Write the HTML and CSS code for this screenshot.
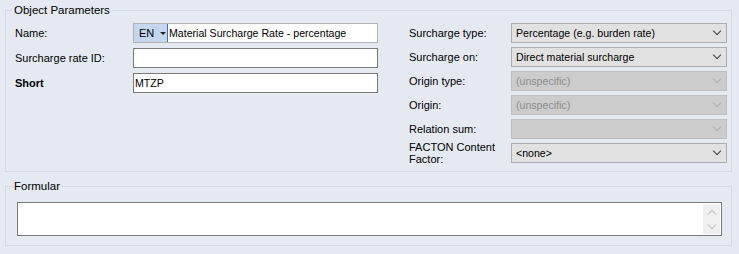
FILE: index.html
```html
<!DOCTYPE html>
<html lang="en">
<head>
    <meta charset="UTF-8">
    <title>Object Parameters</title>
    <link rel="stylesheet" href="styles.css">
</head>
<body>
    <fieldset class="group params">
        <legend>Object Parameters</legend>
        <div class="columns">
            <div class="form-grid left">
                <label>Name:</label>
                <div class="textbox name-box">
                    <span class="lang">EN <span class="caret"></span></span>
                    <span class="split"></span>
                    <span class="value">Material Surcharge Rate - percentage</span>
                </div>

                <label>Surcharge rate ID:</label>
                <div class="textbox"></div>

                <label class="bold">Short</label>
                <div class="textbox"><span class="value">MTZP</span></div>
            </div>

            <div class="form-grid right">
                <label>Surcharge type:</label>
                <div class="combo">Percentage (e.g. burden rate)<span class="chev"></span></div>

                <label>Surcharge on:</label>
                <div class="combo">Direct material surcharge<span class="chev"></span></div>

                <label>Origin type:</label>
                <div class="combo disabled">(unspecific)<span class="chev"></span></div>

                <label>Origin:</label>
                <div class="combo disabled">(unspecific)<span class="chev"></span></div>

                <label>Relation sum:</label>
                <div class="combo disabled"><span class="chev"></span></div>

                <label class="two-lines">FACTON Content Factor:</label>
                <div class="combo">&lt;none&gt;<span class="chev"></span></div>
            </div>
        </div>
    </fieldset>

    <fieldset class="group formular">
        <legend>Formular</legend>
        <div class="memo">
            <div class="scroll">
                <span class="arrow up"></span>
                <span class="arrow down"></span>
            </div>
        </div>
    </fieldset>
</body>
</html>
```

FILE: styles.css
```css
body {
    margin: 0;
    padding: 4px 0 0 0;
    background-color: #e5e9f2;
    font-family: "Liberation Sans", Arial, sans-serif;
    font-size: 11px;
    color: #000;
    width: 739px;
    height: 250px;
    overflow: hidden;
}
.group {
    margin: 0 0 0 5px;
    width: 727px;
    padding: 0;
    border: 1px solid #d6d9df;
    box-sizing: border-box;
}
.group legend {
    margin-left: 6px;
    padding: 0 2px;
    font-size: 11.5px;
    line-height: 13px;
}
.columns {
    display: flex;
    padding: 6px 0 8px 9px;
}
.form-grid {
    display: grid;
    row-gap: 4px;
    align-items: center;
}
.form-grid.left {
    grid-template-columns: 118px 245px;
    grid-auto-rows: 20px;
    row-gap: 5px;
    align-self: flex-start;
}
.form-grid.right {
    margin-left: 31px;
    grid-template-columns: 102px 216px;
    grid-auto-rows: 20px;
}
.form-grid label {
    white-space: nowrap;
}
.form-grid label.bold {
    font-weight: bold;
}
.form-grid label.two-lines {
    white-space: normal;
    width: 90px;
    line-height: 12px;
}
.textbox {
    height: 20px;
    box-sizing: border-box;
    border: 1px solid #7a7a7a;
    background-color: #fff;
    display: flex;
    align-items: center;
    overflow: hidden;
}
.textbox .value {
    padding-left: 1px;
    font-size: 10.6px;
}
.name-box {
    border-color: #b4b4b4;
}
.lang {
    align-self: stretch;
    width: 33px;
    background-color: #c6d6ee;
    display: flex;
    align-items: center;
    padding-left: 5px;
    box-sizing: border-box;
}
.caret {
    margin-left: 6px;
    width: 0;
    height: 0;
    border-left: 3px solid transparent;
    border-right: 3px solid transparent;
    border-top: 3px solid #222;
}
.split {
    align-self: stretch;
    width: 1px;
    background-color: #3472c7;
}
.combo {
    position: relative;
    height: 20px;
    box-sizing: border-box;
    border: 1px solid #adadad;
    background-color: #e1e1e1;
    padding-left: 4px;
    line-height: 18px;
    font-size: 10.6px;
    white-space: nowrap;
}
.combo.disabled {
    background-color: #cccccc;
    border-color: #bfbfbf;
    color: #8d8d8d;
}
.chev {
    position: absolute;
    right: 6px;
    top: 4px;
    width: 5px;
    height: 5px;
    border-right: 1px solid #404040;
    border-bottom: 1px solid #404040;
    transform: rotate(45deg);
}
.combo.disabled .chev {
    border-color: #b0b0b0;
}
.formular {
    margin-top: 8px;
}
.memo {
    margin: 9px 9px 9px 11px;
    height: 34px;
    box-sizing: border-box;
    border: 1px solid #7a7a7a;
    background-color: #fff;
    display: flex;
    justify-content: flex-end;
}
.scroll {
    width: 17px;
    margin: 1px 1px 1px 0;
    background-color: #f0f0f0;
    display: flex;
    flex-direction: column;
    justify-content: space-around;
    align-items: center;
}
.arrow {
    width: 5px;
    height: 5px;
    border-right: 1px solid #c2c2c2;
    border-bottom: 1px solid #c2c2c2;
}
.arrow.up {
    transform: rotate(-135deg);
    margin-top: 4px;
}
.arrow.down {
    transform: rotate(45deg);
    margin-bottom: 4px;
}
```
